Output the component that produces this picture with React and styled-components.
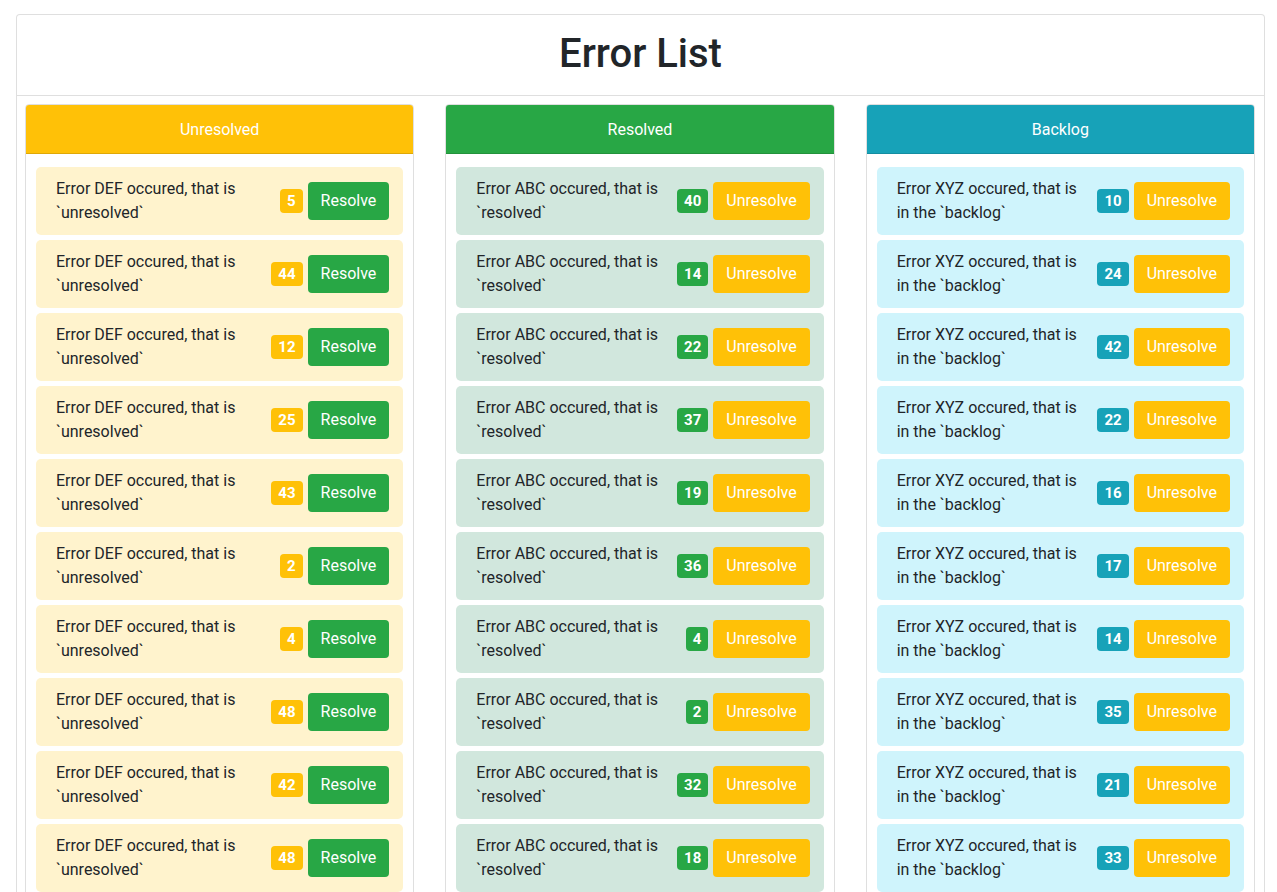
import React from "react";
import styled, { createGlobalStyle } from "styled-components";

const GlobalStyle = createGlobalStyle`
  body {
    margin: 0;
    font-family: Roboto, "Noto Sans", sans-serif;
    font-size: 16px;
    line-height: 24px;
    color: #212529;
    background: #fff;
  }
`;

const Page = styled.div`
  padding: 14px 12px 0 16px;
`;

const Card = styled.div`
  border: 1px solid rgba(0, 0, 0, 0.125);
  border-radius: 4px;
  background: #fff;
`;

const CardHeader = styled.div`
  padding: 15px 20px 9px;
  border-bottom: 1px solid rgba(0, 0, 0, 0.125);
  text-align: center;
`;

const Title = styled.h1`
  margin: 0 0 8px;
  font-size: 40px;
  line-height: 48px;
  font-weight: 500;
  color: #212529;
`;

const Columns = styled.div`
  display: grid;
  grid-template-columns: repeat(3, 1fr);
  column-gap: 31px;
  padding: 8px 9px 8px 8px;
`;

const Column = styled.div`
  border: 1px solid rgba(0, 0, 0, 0.125);
  border-radius: 4px;
  overflow: hidden;
`;

const ColumnHeader = styled.div`
  background: ${({ $color }) => $color};
  color: #fff;
  text-align: center;
  padding: 13px 20px 11px;
  border-bottom: 1px solid rgba(0, 0, 0, 0.125);
`;

const List = styled.div`
  display: flex;
  flex-direction: column;
  gap: 5px;
  padding: 13px 10px 10px;
`;

const Item = styled.div`
  display: flex;
  align-items: center;
  background: ${({ $bg }) => $bg};
  border-radius: 5px;
  padding: 10px 14px 10px 20px;
`;

const Message = styled.div`
  flex: 1;
  max-width: 196px;
  padding-right: 8px;
  margin-right: auto;
`;

const Actions = styled.div`
  display: flex;
  align-items: center;
  gap: 5px;
`;

const Badge = styled.span`
  display: inline-block;
  background: ${({ $color }) => $color};
  color: #fff;
  font-weight: 700;
  font-size: 15px;
  line-height: 24px;
  height: 24px;
  padding: 0 7px;
  border-radius: 4px;
`;

const Button = styled.button`
  font-family: inherit;
  font-size: 16px;
  line-height: 24px;
  padding: 6px 12px;
  border: 1px solid transparent;
  border-radius: 4px;
  color: #fff;
  background: ${({ $color }) => $color};
  cursor: pointer;
`;

const YELLOW = "#ffc107";
const GREEN = "#28a745";
const TEAL = "#17a2b8";

const columns = [
  {
    title: "Unresolved",
    color: YELLOW,
    bg: "#fff3cd",
    text: "Error DEF occured, that is `unresolved`",
    action: "Resolve",
    actionColor: GREEN,
    counts: [5, 44, 12, 25, 43, 2, 4, 48, 42, 48],
  },
  {
    title: "Resolved",
    color: GREEN,
    bg: "#d1e7dd",
    text: "Error ABC occured, that is `resolved`",
    action: "Unresolve",
    actionColor: YELLOW,
    counts: [40, 14, 22, 37, 19, 36, 4, 2, 32, 18],
  },
  {
    title: "Backlog",
    color: TEAL,
    bg: "#cff4fc",
    text: "Error XYZ occured, that is in the `backlog`",
    action: "Unresolve",
    actionColor: YELLOW,
    counts: [10, 24, 42, 22, 16, 17, 14, 35, 21, 33],
  },
];

const App = () => (
  <Page>
    <GlobalStyle />
    <Card>
      <CardHeader>
        <Title>Error List</Title>
      </CardHeader>
      <Columns>
        {columns.map((col) => (
          <Column key={col.title}>
            <ColumnHeader $color={col.color}>{col.title}</ColumnHeader>
            <List>
              {col.counts.map((count, i) => (
                <Item key={i} $bg={col.bg}>
                  <Message>{col.text}</Message>
                  <Actions>
                    <Badge $color={col.color}>{count}</Badge>
                    <Button $color={col.actionColor}>{col.action}</Button>
                  </Actions>
                </Item>
              ))}
            </List>
          </Column>
        ))}
      </Columns>
    </Card>
  </Page>
);

export default App;
